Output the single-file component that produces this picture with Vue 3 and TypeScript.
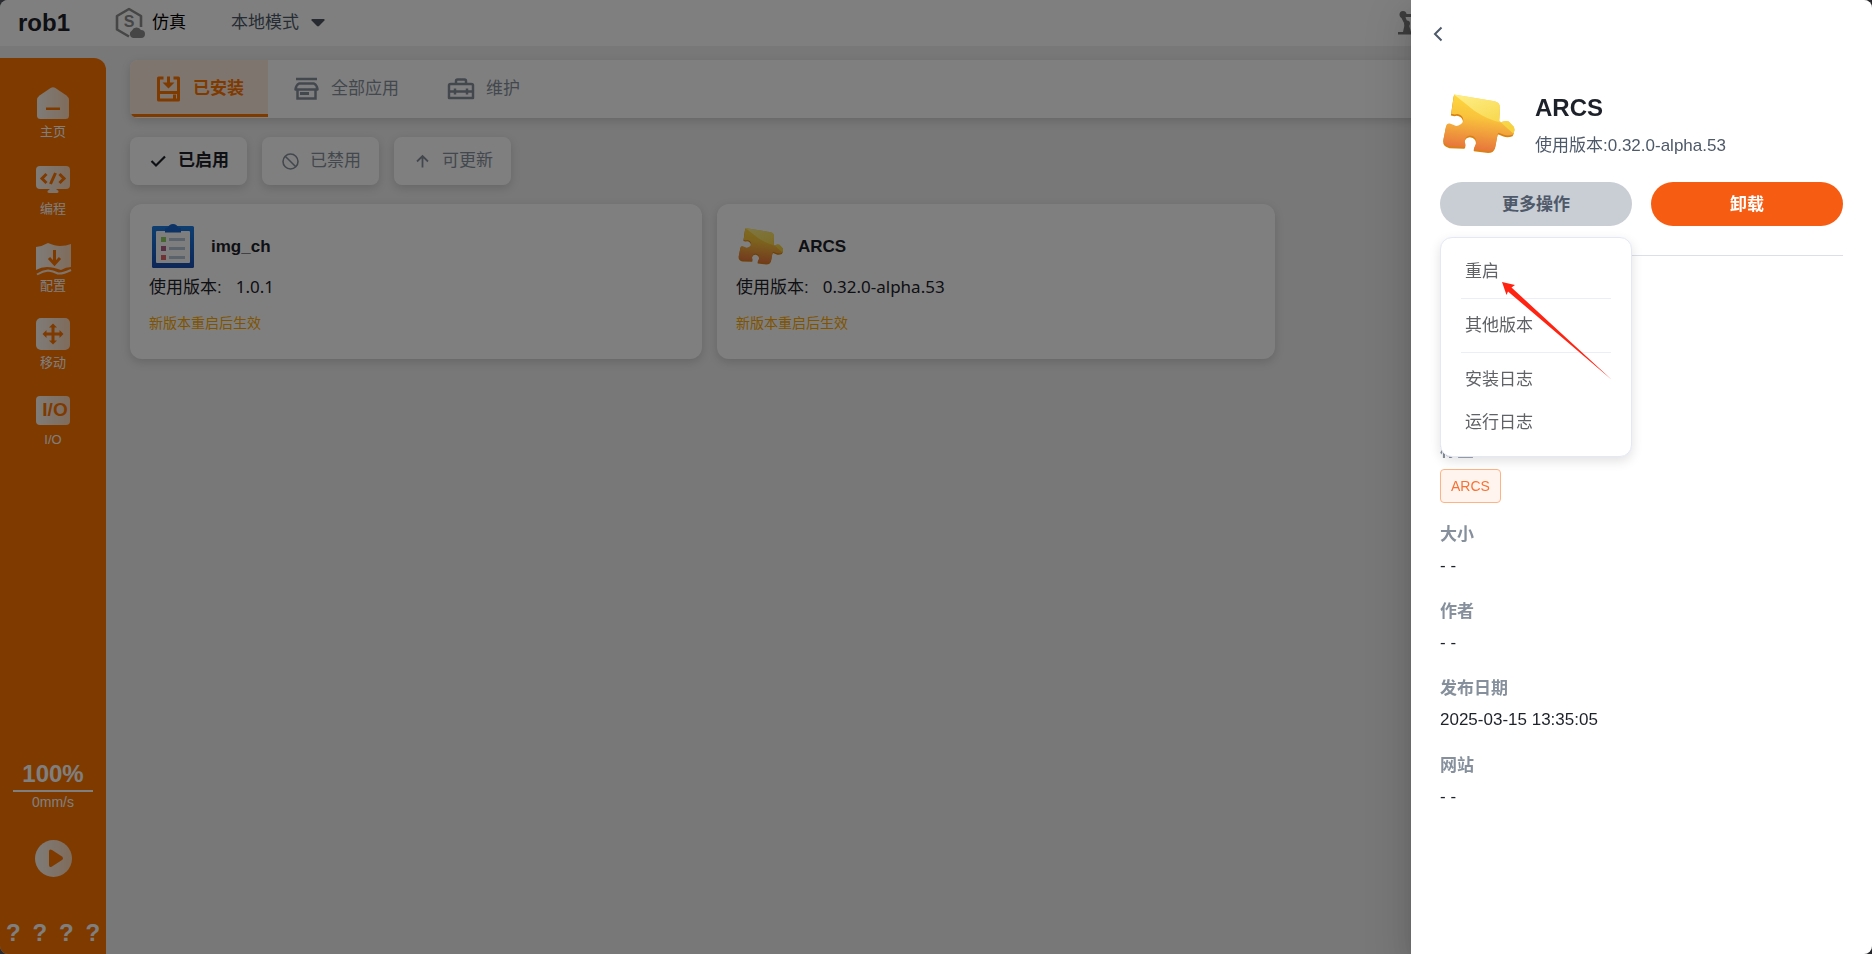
<script setup lang="ts">
import { ref } from 'vue'

interface AppItem {
  name: string
  version: string
  icon: 'clipboard' | 'puzzle'
}

interface Detail {
  label: string
  value: string
  tag?: boolean
}

const apps: AppItem[] = [
  { name: 'img_ch', version: '1.0.1', icon: 'clipboard' },
  { name: 'ARCS', version: '0.32.0-alpha.53', icon: 'puzzle' },
]

const navItems = [
  { id: 'home', label: '主页' },
  { id: 'code', label: '编程' },
  { id: 'config', label: '配置' },
  { id: 'move', label: '移动' },
  { id: 'io', label: 'I/O' },
]

const tabs = [
  { id: 'installed', label: '已安装' },
  { id: 'all', label: '全部应用' },
  { id: 'maintain', label: '维护' },
]
const activeTab = ref('installed')

const filters = [
  { id: 'enabled', label: '已启用' },
  { id: 'disabled', label: '已禁用' },
  { id: 'updatable', label: '可更新' },
]
const activeFilter = ref('enabled')

const details: Detail[] = [
  { label: '标签', value: 'ARCS', tag: true },
  { label: '大小', value: '- -' },
  { label: '作者', value: '- -' },
  { label: '发布日期', value: '2025-03-15 13:35:05' },
  { label: '网站', value: '- -' },
]

const menuGroups = [['重启'], ['其他版本'], ['安装日志', '运行日志']]
const menuOpen = ref(true)
</script>

<template>
  <div class="page">
    <svg class="defs" width="0" height="0" aria-hidden="true">
      <defs>
        <linearGradient id="fade" x1="0" y1="0" x2="1" y2="0">
          <stop offset="0" stop-color="#fff" stop-opacity="0.95" />
          <stop offset="1" stop-color="#fff" stop-opacity="0.72" />
        </linearGradient>
        <linearGradient id="pieceBody" x1="0.55" y1="0" x2="0.4" y2="1">
          <stop offset="0" stop-color="#ffd93f" />
          <stop offset="0.4" stop-color="#f9c43c" />
          <stop offset="1" stop-color="#e6713c" />
        </linearGradient>
        <linearGradient id="pieceLight" x1="0" y1="0" x2="0.6" y2="1">
          <stop offset="0" stop-color="#fff08c" />
          <stop offset="1" stop-color="#f6d23f" />
        </linearGradient>
        <linearGradient id="board" x1="0" y1="0" x2="0" y2="1">
          <stop offset="0" stop-color="#1c7ce0" />
          <stop offset="1" stop-color="#1a4db0" />
        </linearGradient>
        <path
          id="pieceShape"
          d="M72 46 L188 65 Q204 69 203 84 L201 120 Q203 126 210 124 Q220 120 228 123 L243 139 Q246 146 243 154 L240 160 Q226 166 214 161 L200 155 Q197 155 196 162 L190 194 Q186 208 170 208 L130 203 Q127 200 131 194 Q139 182 133 171 Q128 163 118 163 Q106 164 103 176 Q102 182 105 190 Q106 196 101 196 L60 194 Q41 190 42 174 L50 134 Q53 127 60 129 Q70 133 78 136 Q92 134 98 124 Q100 112 92 106 Q84 99 74 103 L64 101 Z"
        />
        <clipPath id="pieceClip"><use href="#pieceShape" /></clipPath>
        <symbol id="puzzle" viewBox="32 46 214 174">
          <use href="#pieceShape" fill="#d9820f" transform="translate(-1 5)" />
          <use href="#pieceShape" fill="url(#pieceBody)" />
          <path
            d="M72 46 L130 92 Q165 116 206 126 L244 160 L260 140 L210 40 Z"
            fill="url(#pieceLight)"
            clip-path="url(#pieceClip)"
          />
        </symbol>
      </defs>
    </svg>

    <header class="topbar">
      <h1 class="robot-name">rob1</h1>
      <div class="sim">
        <svg width="30" height="32" viewBox="0 0 30 32" aria-hidden="true">
          <path
            d="M14 29.500 L2 22.500 V9 L14 2 L26 9 V20"
            fill="none"
            stroke="#8c8c8c"
            stroke-width="2.600"
            stroke-linejoin="round"
          />
          <text x="14" y="20" text-anchor="middle" class="sim-letter">S</text>
          <path
            d="M18 31 a4 4 0 0 1 -1 -7.500 a5 5 0 0 1 9 -0.500 a4 4 0 0 1 0 8 Z"
            fill="#8c8c8c"
          />
        </svg>
        <span>仿真</span>
      </div>
      <button class="mode" type="button">
        本地模式
        <svg width="14" height="8" viewBox="0 0 14 8" aria-hidden="true">
          <path d="M1 0 H13 Q14 0.500 13.400 1.400 L8 7 Q7 7.800 6 7 L0.600 1.400 Q0 0.500 1 0 Z" fill="#4e5560" />
        </svg>
      </button>
      <svg class="arm" width="30" height="24" viewBox="0 0 30 24" aria-hidden="true">
        <g fill="#7a7a7a">
          <circle cx="5" cy="3.500" r="3.500" />
          <circle cx="9" cy="12.500" r="3" />
          <path d="M8 3 H22 V6 H8 Z M3 6 L7 5 L9 10 L6 12 Z M6.500 14 L11 14 L13 21 H5 Z M0 21 H22 V23.500 H0 Z" />
        </g>
      </svg>
    </header>

    <div class="body">
      <aside class="sidebar">
        <nav class="nav">
          <a v-for="item in navItems" :key="item.id" class="nav-item" href="#">
            <svg width="36" height="32" viewBox="0 0 36 32" aria-hidden="true">
              <template v-if="item.id === 'home'">
                <path
                  d="M16 0.800 Q18 -0.500 20 0.800 L31.500 8.500 Q34 10.500 34 13 V28.500 Q34 32 30.500 32 H5.500 Q2 32 2 28.500 V13 Q2 10.500 4.500 8.500 Z"
                  fill="url(#fade)"
                />
                <rect x="11" y="20.500" width="14" height="2.500" class="cut-fill" />
              </template>
              <template v-else-if="item.id === 'code'">
                <rect x="1" y="2" width="34" height="23" rx="4" fill="url(#fade)" />
                <path d="M15 25 H21 L23.500 27 Q24 29 22 29 H14 Q12 29 12.500 27 Z" fill="#fff" fill-opacity="0.84" />
                <path d="M11.500 10 L7 14.500 L11.500 19 M24.500 10 L29 14.500 L24.500 19 M20.500 9 L15.500 20" class="cut" />
              </template>
              <template v-else-if="item.id === 'config'">
                <path
                  d="M1 6 Q8 5 13 2 Q20 5 25 5 Q31 5 36 3 V26 Q31 26 26 29 Q18 26 12 26 Q6 26 1 29 Z"
                  fill="url(#fade)"
                />
                <path
                  d="M2 33.500 Q8 30 13 29.500 Q18 30 23 32.500 Q28 33 36 29"
                  fill="none"
                  stroke="#fff"
                  stroke-opacity="0.84"
                  stroke-width="2"
                />
                <path d="M19.500 9 V22.500 M14 17 L19.500 23 L25 17" class="cut" />
              </template>
              <template v-else-if="item.id === 'move'">
                <rect x="1" y="0" width="34" height="32" rx="5" fill="url(#fade)" />
                <path d="M18 8 V24 M10 16 H26" class="cut" />
                <path
                  d="M18 5.500 L22 9.500 H14 Z M18 26.500 L22 22.500 H14 Z M7.500 16 L11.500 12 V20 Z M28.500 16 L24.500 12 V20 Z"
                  class="cut-fill"
                />
              </template>
              <template v-else>
                <rect x="1" y="1" width="34" height="29" rx="4" fill="url(#fade)" />
                <text x="20" y="21" text-anchor="middle" class="io-text">I/O</text>
              </template>
            </svg>
            <span>{{ item.label }}</span>
          </a>
        </nav>

        <div class="speed">
          <strong class="percent">100%</strong>
          <span class="rate">0mm/s</span>
        </div>
        <button class="play" type="button" aria-label="播放">
          <svg width="37" height="37" viewBox="0 0 37 37" aria-hidden="true">
            <circle cx="18.500" cy="18.500" r="18.500" fill="url(#fade)" />
            <path
              d="M14 11.500 Q14 8.500 17 10 L27 16.500 Q29 18.300 27 20 L17 26.500 Q14 28 14 25 Z"
              class="cut-fill"
            />
          </svg>
        </button>
        <div class="marks"><span v-for="n in 4" :key="n">?</span></div>
      </aside>

      <main class="main">
        <div class="tabbar" role="tablist">
          <button
            v-for="tab in tabs"
            :key="tab.id"
            type="button"
            role="tab"
            class="tab"
            :class="{ active: tab.id === activeTab }"
            :aria-selected="tab.id === activeTab"
            @click="activeTab = tab.id"
          >
            <svg width="28" height="26" viewBox="0 0 28 26" fill="none" stroke="currentColor" aria-hidden="true">
              <template v-if="tab.id === 'installed'">
                <path
                  d="M9.500 2 H4.500 V24 H24.500 V2 H19.500 M4.500 16.500 H24.500 M20.500 18.500 V22.500"
                  stroke-width="3"
                  stroke-linejoin="round"
                />
                <path d="M14.500 0.500 V8" stroke-width="3" />
                <path d="M8.500 6.500 L14.500 12.500 L20.500 6.500 Z" fill="currentColor" stroke="none" />
              </template>
              <template v-else-if="tab.id === 'all'">
                <path d="M4 3 H25" stroke-width="2.500" />
                <path d="M7 7.500 H22 Q25 9 25.500 13.500 H3.500 Q4 9 7 7.500 Z" stroke-width="2.500" stroke-linejoin="round" />
                <path d="M5.500 13 V22.500 H23.500 V13" stroke-width="2.500" />
                <path d="M8 17.500 H17" stroke-width="3" />
              </template>
              <template v-else>
                <path
                  d="M2 22 V9.500 Q2 8 3.500 8 H24.500 Q26 8 26 9.500 V22 Z M9 8 V5 Q9 3.500 10.500 3.500 H17.500 Q19 3.500 19 5 V8 M2 15.500 H26"
                  stroke-width="2.500"
                  stroke-linejoin="round"
                />
                <path d="M8 12.500 V18.500 M20 12.500 V18.500" stroke-width="2.500" />
              </template>
            </svg>
            {{ tab.label }}
          </button>
        </div>

        <div class="filters">
          <button
            v-for="f in filters"
            :key="f.id"
            type="button"
            class="filter"
            :class="{ active: f.id === activeFilter }"
            @click="activeFilter = f.id"
          >
            <svg width="17" height="17" viewBox="0 0 17 17" fill="none" stroke="currentColor" aria-hidden="true">
              <path v-if="f.id === 'enabled'" d="M1.500 8 L6 12.500 L15 3.500" stroke-width="2.200" />
              <template v-else-if="f.id === 'disabled'">
                <circle cx="8.500" cy="8.500" r="7.500" stroke-width="1.600" />
                <path d="M3.200 3.200 L13.800 13.800" stroke-width="1.600" />
              </template>
              <path v-else d="M8.500 14.500 V3 M3 8.500 L8.500 3 L14 8.500" stroke-width="1.800" />
            </svg>
            {{ f.label }}
          </button>
        </div>

        <div class="cards">
          <article v-for="app in apps" :key="app.name" class="card">
            <div class="card-head">
              <svg v-if="app.icon === 'clipboard'" width="48" height="48" viewBox="0 0 48 48" aria-hidden="true">
                <rect x="3" y="3" width="42" height="42" rx="1.500" fill="url(#board)" />
                <rect x="7" y="8" width="34" height="32" rx="1" fill="#fdfdfd" />
                <path d="M16 9.500 V6 Q16 4.500 19 4.500 Q20 1 24 1 Q28 1 29 4.500 Q32 4.500 32 6 V9.500 Z" fill="#1a66cc" />
                <path d="M12 14 h5 v5 h-5 Z" fill="#8cd060" />
                <path d="M12 23 h5 v5 h-5 Z" fill="#b05c84" />
                <path d="M12 32 h5 v5 h-5 Z" fill="#e06468" />
                <path d="M20 15 h16 v3 h-16 Z M20 24 h16 v3 h-16 Z M20 33 h16 v3 h-16 Z" fill="#b4c6d8" />
              </svg>
              <svg v-else width="48" height="38" aria-hidden="true"><use href="#puzzle" /></svg>
              <h2 class="card-name">{{ app.name }}</h2>
            </div>
            <p class="card-version">
              使用版本:<span class="card-number">{{ app.version }}</span>
            </p>
            <p class="card-note">新版本重启后生效</p>
          </article>
        </div>
      </main>
    </div>
  </div>

  <div class="mask">
    <section class="drawer" role="dialog" aria-label="ARCS">
      <button class="back" type="button" aria-label="返回">
        <svg width="12" height="16" viewBox="0 0 12 16" aria-hidden="true">
          <path d="M9.500 1.500 L3 8 L9.500 14.500" fill="none" stroke="#4e5969" stroke-width="2" />
        </svg>
      </button>

      <div class="app-head">
        <svg width="75" height="62" aria-hidden="true"><use href="#puzzle" /></svg>
        <div>
          <h2 class="app-name">ARCS</h2>
          <p class="app-version">使用版本:0.32.0-alpha.53</p>
        </div>
      </div>

      <div class="actions">
        <div class="more">
          <button class="pill" type="button" :aria-expanded="menuOpen" @click="menuOpen = !menuOpen">更多操作</button>
          <div v-if="menuOpen" class="menu" role="menu">
            <div v-for="(group, i) in menuGroups" :key="i" class="menu-group">
              <button v-for="entry in group" :key="entry" class="menu-item" type="button" role="menuitem">
                {{ entry }}
              </button>
            </div>
            <svg class="pointer" width="112" height="100" viewBox="0 0 112 100" aria-hidden="true">
              <path d="M1 1 L14 4 L10.500 6.500 L111 99 L7 10.500 L5.500 14 Z" fill="#ff2312" />
            </svg>
          </div>
        </div>
        <button class="pill danger" type="button">卸载</button>
      </div>

      <dl class="details">
        <div v-for="d in details" :key="d.label" class="detail" :class="{ tagged: d.tag }">
          <dt>{{ d.label }}</dt>
          <dd><span :class="{ tag: d.tag }">{{ d.value }}</span></dd>
        </div>
      </dl>
    </section>
  </div>
</template>

<style>
body {
  margin: 0;
  background: #55585f;
}
</style>

<style scoped>
.page,
.mask {
  font-family: 'Liberation Sans', 'Noto Sans CJK SC', sans-serif;
  font-size: 17px;
  line-height: 24px;
}

.page *,
.mask * {
  box-sizing: border-box;
}

button {
  border: 0;
  padding: 0;
  background: none;
  font: inherit;
  color: inherit;
  cursor: pointer;
}

h1,
h2,
p,
dl,
dd {
  margin: 0;
}

svg {
  display: block;
  flex: none;
}

.page {
  display: flex;
  flex-direction: column;
  min-height: 100vh;
  overflow: hidden;
  border-radius: 8px;
  background: #f0f0f0;
}

.defs {
  position: absolute;
}

.topbar {
  display: flex;
  align-items: center;
  height: 46px;
  padding-left: 18px;
  background: #fff;
}

.robot-name {
  width: 97px;
  font-size: 24px;
  line-height: 32px;
  color: #1d2129;
}

.sim {
  display: flex;
  align-items: center;
  gap: 7px;
  width: 116px;
  color: #000;
}

.sim-letter {
  font-size: 16px;
  font-weight: bold;
  fill: #8c8c8c;
}

.mode {
  display: flex;
  align-items: center;
  gap: 12px;
  color: #4e5969;
}

.arm {
  margin-left: auto;
  margin-right: 444px;
}

.body {
  display: flex;
  flex: 1;
}

.sidebar {
  display: flex;
  flex-direction: column;
  align-items: center;
  width: 106px;
  margin-top: 12px;
  padding: 29px 0 7px;
  border-radius: 0 12px 0 0;
  background: #ff7500;
  color: #fff;
}

.nav {
  display: flex;
  flex-direction: column;
  gap: 23px;
}

.nav-item {
  display: flex;
  flex-direction: column;
  align-items: center;
  gap: 4px;
  font-size: 13px;
  line-height: 18px;
  color: #fff;
  text-decoration: none;
}

.nav-item svg {
  overflow: visible;
}

.cut {
  fill: none;
  stroke: #ff7500;
  stroke-width: 3;
}

.cut-fill {
  fill: #ff7500;
}

.io-text {
  font-size: 19px;
  font-weight: bold;
  fill: #ff7500;
}

.speed {
  display: flex;
  flex-direction: column;
  align-items: center;
  width: 80px;
  margin-top: auto;
}

.percent {
  width: 100%;
  border-bottom: 2px solid #fff;
  font-size: 24px;
  line-height: 32px;
  text-align: center;
}

.rate {
  font-size: 14px;
  line-height: 20px;
}

.play {
  margin: 28px 0 42px;
}

.marks {
  display: flex;
  width: 100%;
  justify-content: space-around;
  font-size: 24px;
  font-weight: bold;
  line-height: 28px;
}

.main {
  flex: 1;
  padding: 14px 0 24px 24px;
}

.tabbar {
  display: flex;
  height: 58px;
  border-radius: 8px 0 0 8px;
  overflow: hidden;
  background: #fff;
}

.tabbar,
.filter,
.card {
  box-shadow: 0 3px 10px rgba(0, 0, 0, 0.15);
}

.tab {
  display: flex;
  align-items: center;
  gap: 11px;
  height: 57px;
  padding: 4px 24px 0;
  border-bottom: 3px solid transparent;
  color: #86909c;
}

.tab.active {
  border-color: #ff7500;
  background: #ffeadf;
  color: #ff7500;
  font-weight: bold;
}

.filters {
  display: flex;
  gap: 15px;
  margin: 19px 0;
}

.filter {
  display: flex;
  align-items: center;
  gap: 11px;
  height: 48px;
  padding: 0 18px 0 20px;
  border-radius: 8px;
  background: #fff;
  color: #86909c;
}

.filter.active {
  color: #1d2129;
  font-weight: bold;
}

.cards {
  display: grid;
  grid-template-columns: 572fr 558fr 582fr;
  gap: 15px;
}

.card {
  padding: 19px 19px 26px;
  border-radius: 12px;
  background: #fff;
  color: #1d2129;
}

.card-head {
  display: flex;
  align-items: center;
  gap: 14px;
  height: 48px;
}

.card-name {
  font-size: 17px;
  line-height: 24px;
}

.card-version {
  margin: 5px 0 13px;
  line-height: 24px;
}

.card-number {
  margin-left: 14px;
  font-family: 'Noto Sans', sans-serif;
  font-size: 17px;
  line-height: 20px;
}

.card-note {
  font-size: 14px;
  line-height: 20px;
  color: #ffa800;
}

.mask {
  position: fixed;
  inset: 0;
  display: flex;
  justify-content: flex-end;
  overflow: hidden;
  background: rgba(0, 0, 0, 0.5);
}

.drawer {
  width: 461px;
  padding: 26px 29px;
  border-radius: 0 8px 8px 0;
  background: #fff;
  box-shadow:
    0 16px 48px 16px rgba(0, 0, 0, 0.08),
    0 12px 32px rgba(0, 0, 0, 0.12),
    0 8px 16px -8px rgba(0, 0, 0, 0.16);
}

.back {
  display: block;
  margin: 0 0 50px -8px;
}

.app-head {
  display: flex;
  align-items: center;
  gap: 20px;
}

.app-name {
  font-size: 24px;
  line-height: 32px;
  color: #1d2129;
}

.app-version {
  margin-top: 10px;
  color: #4e5969;
}

.actions {
  display: flex;
  gap: 19px;
  padding: 24px 0 29px;
  border-bottom: 1px solid #dcdfe6;
}

.more {
  position: relative;
  flex: 1;
}

.pill {
  width: 100%;
  height: 44px;
  padding-top: 2px;
  border-radius: 22px;
  background: #c9cdd4;
  color: #4e5969;
  font-weight: bold;
}

.pill.danger {
  flex: 1;
  background: #f75c13;
  color: #fff;
}

.menu {
  position: absolute;
  top: 55px;
  left: 0;
  z-index: 1;
  width: 100%;
  padding: 12px 20px;
  border: 1px solid #e4e7f5;
  border-radius: 12px;
  background: #fff;
  box-shadow: 0 4px 12px rgba(0, 0, 0, 0.12);
}

.menu-group + .menu-group {
  margin-top: 5px;
  padding-top: 5px;
  border-top: 1px solid #ebeef5;
}

.menu-item {
  display: block;
  width: 100%;
  height: 43px;
  padding-left: 4px;
  color: #606266;
  text-align: left;
}

.pointer {
  position: absolute;
  top: 43px;
  left: 60px;
}

.details {
  margin-top: 183px;
}

.detail {
  margin-bottom: 22px;
}

.detail.tagged {
  margin-bottom: 20px;
}

.detail dt {
  margin-bottom: 7px;
  color: #86909c;
  font-weight: bold;
}

.detail.tagged dt {
  margin-bottom: 6px;
}

.detail dd {
  color: #1d2129;
}

.tag {
  display: block;
  width: fit-content;
  padding: 0 10px;
  border: 1px solid #ffb286;
  border-radius: 4px;
  background: #fff5ee;
  color: #f77234;
  font-size: 14px;
  line-height: 32px;
}
</style>
